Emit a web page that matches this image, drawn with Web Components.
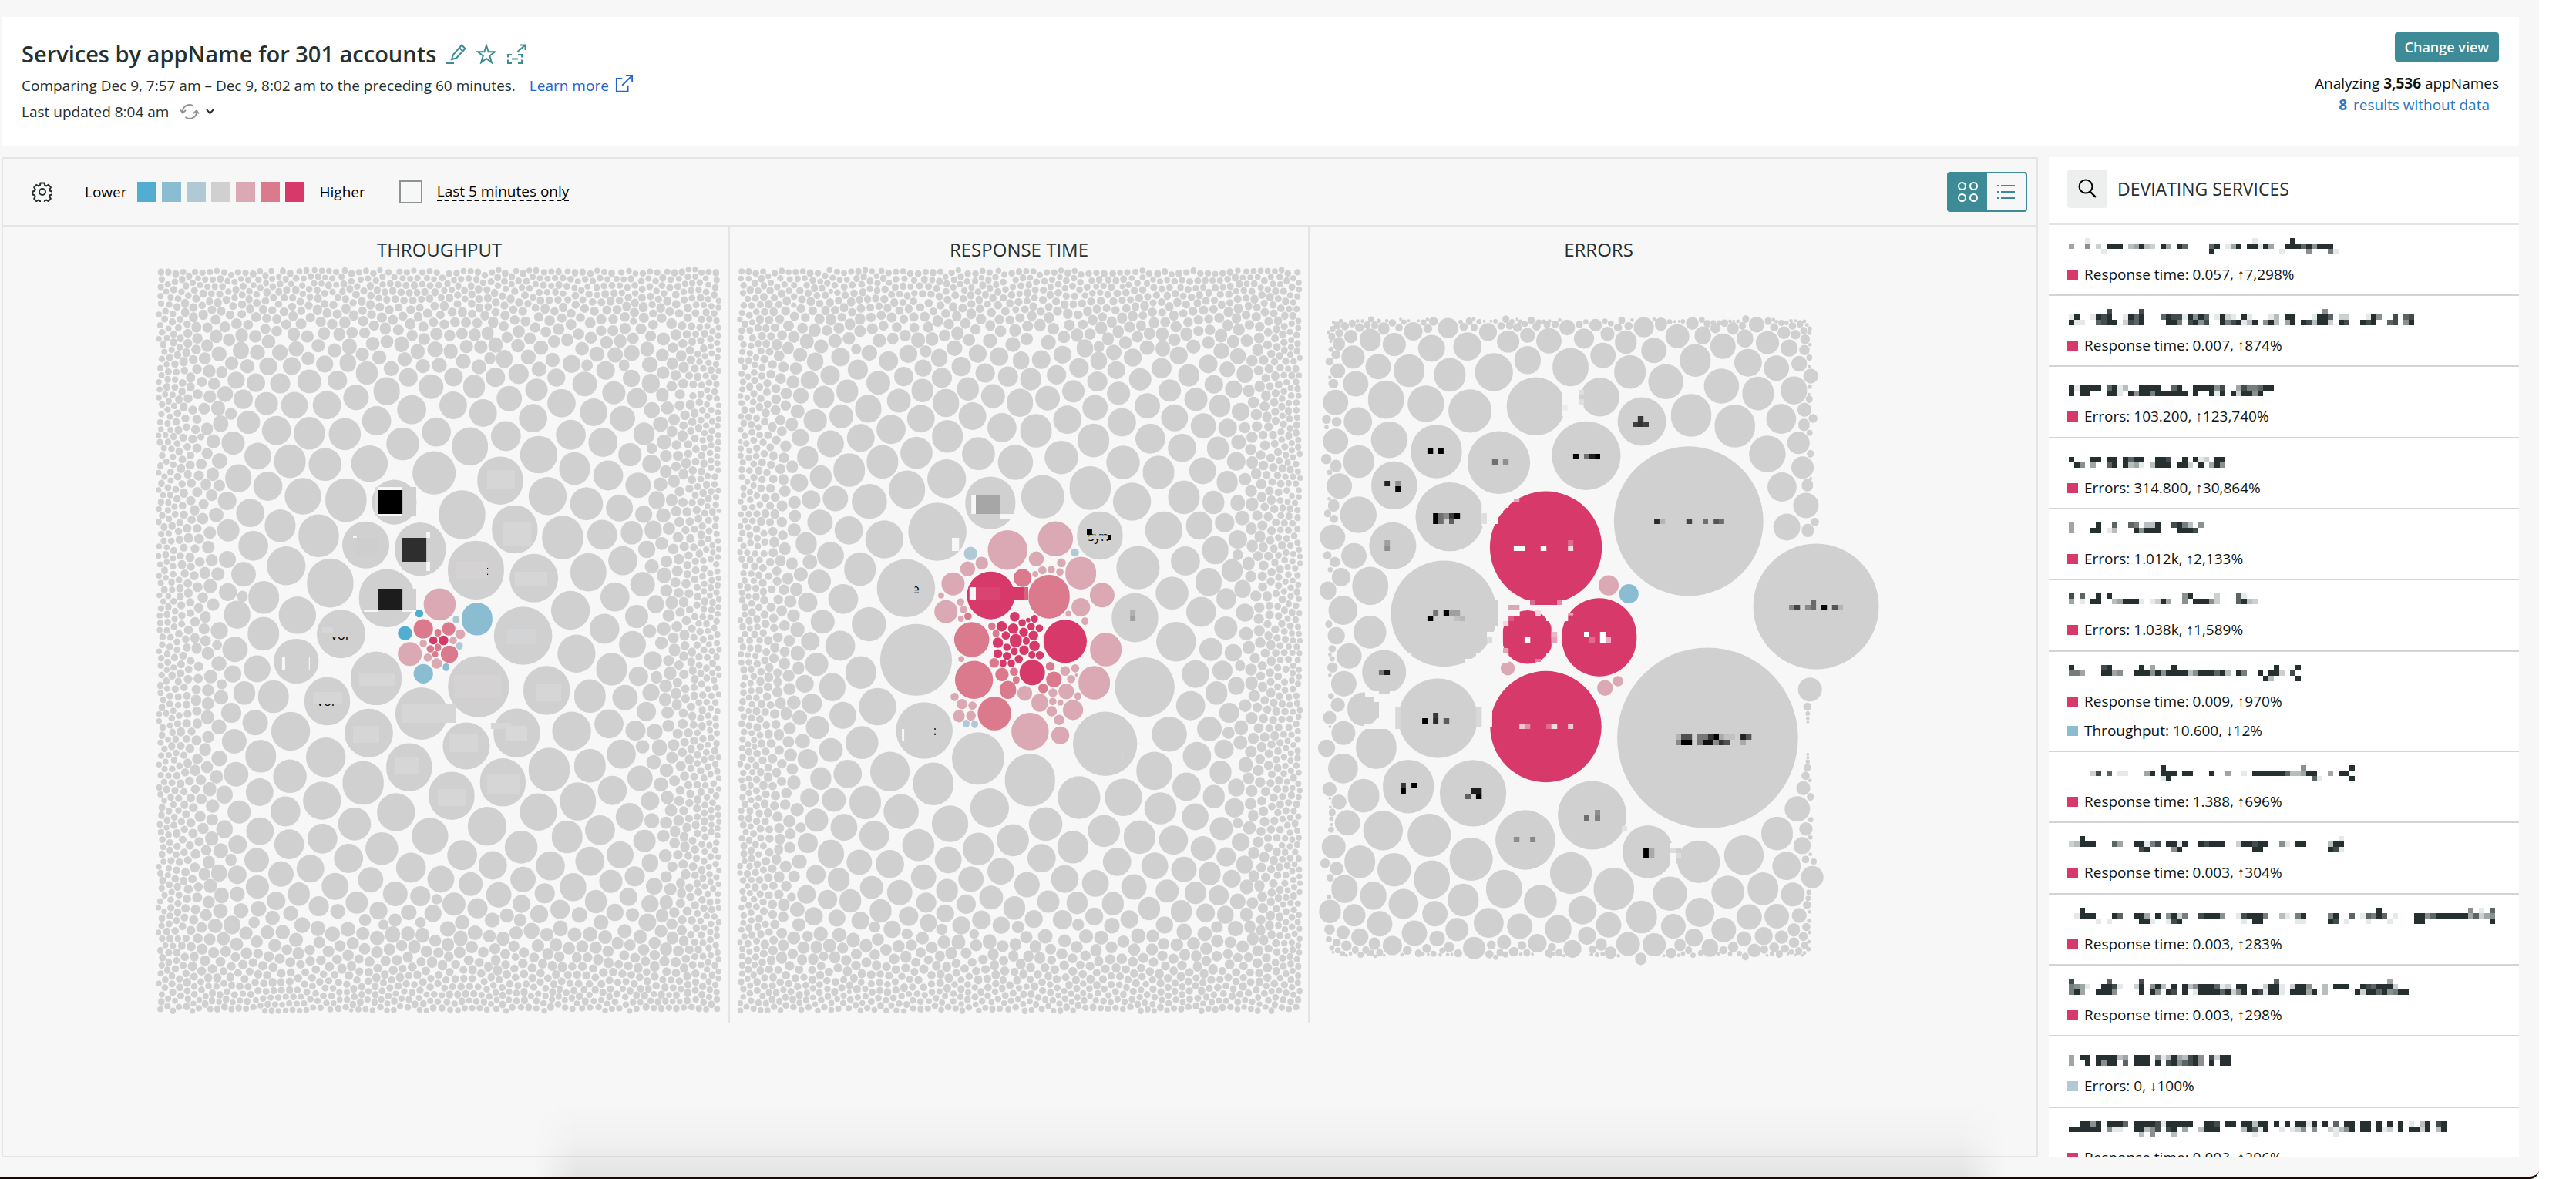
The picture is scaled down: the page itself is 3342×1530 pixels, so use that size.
<!DOCTYPE html>
<html lang="en">
<head>
<meta charset="utf-8">
<title>Services by appName</title>
<style>
  body { margin: 0; background: #fff; font-family: "Open Sans", "Noto Sans", sans-serif; font-size: 19px; color: #0d1414; }
</style>
</head>
<body>
<app-frame>
  <page-header slot="header"></page-header>
  <chart-panel>
    <chart-toolbar slot="toolbar"></chart-toolbar>
    <bubble-chart data="throughput">THROUGHPUT</bubble-chart>
    <bubble-chart data="response">RESPONSE TIME</bubble-chart>
    <bubble-chart data="errors">ERRORS</bubble-chart>
  </chart-panel>
  <service-list>DEVIATING SERVICES</service-list>
</app-frame>

<script>
const define = (name, html, setup) => customElements.define(name, class extends HTMLElement {
  connectedCallback() {
    if (this.shadowRoot) return;
    this.attachShadow({ mode: 'open' }).innerHTML = html;
    if (setup) setup(this, this.shadowRoot);
  }
});

/* ---------- icons ---------- */
const ICONS = {
  pencil: '<path d="M0 25h10M7 20l2-6L20 1.500l4.500 4.500L13 18.500zM17 5l4.500 4.500"/>',
  star: '<path d="M13 2l2.700 8.300H24l-6.700 5.200 2.500 8.700L13 19l-6.800 5.200 2.500-8.700L2 10.300h8.300z"/>',
  share: '<path d="M7 14H2v3.500M2 20.500V25h5M15 14h5v3.500M20 20.500V25h-5M7 19.500h8M14.500 10L24.500 1.500M18 1.500h6.500V8"/>',
  external: '<path d="M10 6.500H2v18h16V16M10 16L24 2M15 2h9v9"/>',
  refresh: '<path d="M4 14a9 9 0 0 1 14.500-8M22 12a9 9 0 0 1-14.500 8M1 10.500l3 4 4-3.500M25 15.500l-3-4-4 3.500"/>',
  chevron: '<path d="M9 10l4.500 5 4.500-5"/>',
  gear: '<circle cx="13" cy="13" r="4"/><path d="M10.500 1.500h5l.7 3 2 .9 2.700-1.600 3 3.400-1.500 2.800.7 1.800 2.600.7v4l-2.600.7-.8 2 1.500 2.700-3 3.200-2.700-1.500-2 .9-.6 3h-5l-.7-3-1.900-.9-2.700 1.500-3-3.200 1.500-2.700-.8-2-2.400-.7v-4l2.500-.7.8-1.900-1.600-2.700 3-3.300 2.700 1.500 2-.9z"/>',
  bubbles: '<circle cx="5.500" cy="5.500" r="4.500"/><circle cx="20.500" cy="5.500" r="4.500"/><circle cx="5.500" cy="20.500" r="4.500"/><circle cx="20.500" cy="20.500" r="4.500"/>',
  list: '<path d="M1 5h2M6 5h18M1 13h2M6 13h18M1 21h2M6 21h18"/>',
  search: '<circle cx="11" cy="10" r="8.500"/><path d="M17 17l7 7" stroke-width="2.400"/>'
};
define('ui-icon', `<style>
  :host { display: inline-block; width: 26px; height: 26px; flex: none; }
  svg { display: block; width: 100%; height: 100%; fill: none; stroke: currentColor; stroke-width: 2; }
</style><svg viewBox="0 0 26 26" aria-hidden="true"></svg>`,
(host, root) => { root.querySelector('svg').innerHTML = ICONS[host.getAttribute('name')]; });

/* ---------- page frame ---------- */
define('app-frame', `<style>
  :host { display: flex; flex-direction: column; gap: 14px; box-sizing: border-box; height: 100vh; margin-right: 48px; position: relative;
    padding: 22px 26px 25px 2px; background: #f7f7f7; border-bottom: 3px solid #1c0505; border-bottom-right-radius: 12px; }
  main { display: flex; gap: 14px; flex: 1; min-height: 0; }
  /* shade that rises from the lower edge of the window */
  :host::after { content: ""; position: absolute; left: 21%; right: 21%; bottom: 0; height: 96px; pointer-events: none;
    background: linear-gradient(rgba(0,0,0,0), rgba(0,0,0,.022) 50%, rgba(0,0,0,.08));
    -webkit-mask: linear-gradient(90deg, transparent, #000 3%, #000 97%, transparent); mask: linear-gradient(90deg, transparent, #000 3%, #000 97%, transparent); }
</style><slot name="header"></slot><main><slot></slot></main>`);

define('page-header', `<style>
  :host { display: flex; justify-content: space-between; padding: 20px 26px 28px; background: #fff; color: #263030; }
  h1 { display: flex; align-items: center; margin: 8px 0 4px; font-size: 29px; line-height: 40px; font-weight: 600; }
  h1 span { margin-right: 13px; }
  h1 button { margin-right: 13px; color: #3c8b96; }
  button { font: inherit; border: 0; padding: 0; background: none; display: flex; color: inherit; cursor: pointer; }
  p { display: flex; align-items: center; margin: 0; line-height: 34px; }
  a { display: flex; align-items: center; gap: 8px; margin-left: 18px; color: #2264d1; text-decoration: none; }
  a ui-icon { width: 24px; height: 24px; margin-bottom: 6px; }
  .refresh { margin-left: 14px; color: #8e9494; }
  .refresh + button { color: #263030; }
  .side { display: flex; flex-direction: column; align-items: flex-end; line-height: 28px; color: #0d1414; }
  .change { height: 38px; align-items: center; margin-bottom: 14px; padding: 0 13px; border-radius: 4px; background: #3c8b96; color: #fff; font-size: 18px; font-weight: 600; }
  b { font-weight: 700; }
  .side a { margin: 0 12px 0 0; color: #2a78bf; }
</style>
<div>
  <h1><span>Services by appName for 301 accounts</span>
    <button aria-label="Edit name"><ui-icon name="pencil"></ui-icon></button>
    <button aria-label="Add to favorites"><ui-icon name="star"></ui-icon></button>
    <button aria-label="Share"><ui-icon name="share"></ui-icon></button></h1>
  <p><span>Comparing Dec 9, 7:57 am – Dec 9, 8:02 am to the preceding 60 minutes.</span>
    <a href="#learn">Learn more <ui-icon name="external"></ui-icon></a></p>
  <p>Last updated 8:04 am <button class="refresh" aria-label="Refresh"><ui-icon name="refresh"></ui-icon></button><button aria-label="Refresh options"><ui-icon name="chevron"></ui-icon></button></p>
</div>
<div class="side">
  <button class="change">Change view</button>
  <span>Analyzing <b>3,536</b> appNames</span>
  <a href="#nodata"><b>8</b>results without data</a>
</div>`);

define('chart-panel', `<style>
  :host { display: flex; flex-direction: column; flex: 1; min-width: 0; box-sizing: border-box; border: 2px solid #e3e4e4; }
  .charts { display: flex; justify-content: center; }
</style><slot name="toolbar"></slot><div class="charts"><slot></slot></div>`);

define('chart-toolbar', `<style>
  :host { display: flex; align-items: center; height: 86px; padding: 0 12px 0 38px; border-bottom: 2px solid #e3e4e4; color: #000; }
  button { display: flex; align-items: center; justify-content: center; border: 0; padding: 0; background: none; color: #263030; cursor: pointer; }
  .scale { display: flex; gap: 7px; margin: 0 20px 0 13px; }
  .scale i { width: 25px; height: 26px; }
  .low { margin-left: 42px; }
  label { display: flex; align-items: center; gap: 19px; margin-left: 44px; }
  input { appearance: none; width: 30px; height: 30px; margin: 0; border: 2px solid #8e9494; }
  label span { line-height: 22px; border-bottom: 2px dashed #000; }
  .views { display: flex; margin-left: auto; border: 2px solid #3c8b96; border-radius: 4px; }
  .views button { width: 50px; height: 48px; color: #3c8b96; }
  .views button[aria-pressed=true] { background: #3c8b96; color: #fff; }
</style>
<button aria-label="Settings"><ui-icon name="gear"></ui-icon></button>
<span class="low">Lower</span>
<span class="scale"><i style="background:#52aed1"></i><i style="background:#8abdd2"></i><i style="background:#b0c9d4"></i><i style="background:#d0d0d0"></i><i style="background:#dba9b3"></i><i style="background:#db798d"></i><i style="background:#d8396b"></i></span>
<span>Higher</span>
<label><input type="checkbox"><span>Last 5 minutes only</span></label>
<div class="views"><button aria-label="Bubble view" aria-pressed="true"><ui-icon name="bubbles"></ui-icon></button><button aria-label="List view" aria-pressed="false"><ui-icon name="list"></ui-icon></button></div>`);

/* ---------- bubble layouts ----------
   Each block: vertical origin, then "x,y,r" triples keyed by colour step.
   Horizontal units are finer than chart pixels by UX, vertical ones by UY. */
const UX = 1568 / 760, UY = 3;
const COLOR = { g: '#d0d0d0', a: '#dba9b3', b: '#db798d', c: '#d8396b', x: '#b0c9d4', y: '#8abdd2', z: '#52aed1', w: '#f7f7f7' };
const CHARTS = {
throughput: { dx: -5, fill: [24, 1541], blocks: [
 { dy: -40, g: '663,1055,60 770,941,58 947,971,61 845,1104,62 986,1161,61 587,1222,63 733,1238,68 882,1320,75 1037,1351,65 643,1429,74 534,1047,55 597,905,49 419,1032,49 461,1186,54 374,1303,52 492,1370,62 314,1426,41 404,1495,50 243,1493,35 521,1568,65 313,1567,42 1008,1575,78 1114,1193,55 1074,1031,51 1178,1061,44 1220,1182,40 1183,1328,48 1275,1283,39 1254,1424,39 1328,1375,33 1135,1476,52 1226,1548,40 1312,1500,31 1050,870,50 962,798,40 866,838,48 776,782,39 686,828,44 616,738,39 710,695,39 821,678,37 901,708,37 1035,728,38 971,652,34 1111,670,38 1173,595,33 1197,705,37 1274,730,34 1251,629,31 1136,793,40 1222,822,39 1146,924,41 1236,951,40 1316,989,34 1294,870,31 1332,789,28 1313,650,27 1298,573,23 1229,542,25 1138,517,24 1266,1078,36 1299,1174,29 1352,906,25 1331,1102,23 1366,1047,22 1339,1239,23 1363,1452,22 643,623,35 561,647,34 483,677,38 396,678,36 321,671,31 259,654,26 273,744,31 348,776,39 436,787,41 531,790,43 590,552,29 511,581,26 436,585,32 358,593,27 293,590,25 240,580,23 326,526,24 389,525,24 762,605,33 701,569,25 822,568,25 877,605,29 934,569,26 996,556,27 1044,617,30 1097,570,24 477,517,23 539,513,22 232,825,31 298,876,36 384,896,42 478,908,44 246,962,35 325,993,39 278,1097,38 358,1147,41 219,1165,30 216,1050,25 286,1225,40 260,1336,33 218,1405,24 655,535,20 740,525,19 784,522,20 848,507,20 890,528,20 958,497,22 1022,490,20 1051,537,20 1087,501,19 270,526,19 228,514,18 623,491,19 691,499,19 578,479,18 433,496,18',
   a: '785,1453,43', b: '741,1548,26 809,1548,18', z: '730,1488,11', x: '829,1512,9', y: '885,1510,41' },
 { dy: 470, g: '401,144,60 615,211,68 484,300,61 889,243,82 736,348,70 1071,258,62 595,424,65 856,474,63 991,424,62 703,557,61 817,668,61 954,616,61 340,282,41 386,417,52 480,518,53 1187,280,42 1245,175,41 1151,115,51 1301,79,36 1281,286,34 1138,416,52 1238,388,39 1078,566,55 1187,551,42 1271,506,39 1338,340,26 1309,414,27 1321,600,34 1317,203,26 1355,142,25 580,618,55 384,592,45 306,514,41 291,383,34 227,345,27 262,268,29 296,174,36 237,98,34 231,194,23 235,456,33 240,584,33 303,654,37 372,729,40 470,687,51 668,732,51 557,778,44 759,825,49 912,787,52 1049,731,50 1155,690,48 1247,647,39 1348,688,25 1293,750,37 1214,802,40 1126,828,41 1003,868,44 845,899,40 630,874,44 471,835,40 382,857,40 304,806,37 248,731,31 244,858,25 295,919,33 360,973,34 439,952,37 541,912,39 708,948,40 788,993,36 927,939,38 1081,941,39 1187,923,39 1268,898,36 1333,844,30 1348,929,22 1307,982,27 1243,1001,31 1142,1024,35 1008,994,34 868,1012,32 600,995,34 505,1021,36 408,1051,29 297,1023,31 243,976,25 347,1077,25 563,1084,30 666,1050,33 733,1059,27 823,1090,31 943,1054,34 1066,1048,27 1203,1080,29 1290,1062,24 767,1126,23 886,1106,27 1004,1089,24 1051,1129,24 1107,1110,26 1254,1122,23 621,1115,24 461,1098,27 209,664,22 209,798,22 195,25,23 702,1122,21 512,1118,20 386,1126,20 300,1108,21 253,1115,20 1159,1132,21 965,1134,19 1301,1131,18 195,523,21 243,1051,20',
   a: '840,39,13 821,64,10 741,75,10 705,116,32 753,130,11 777,153,14', b: '780,33,9 760,96,10 780,91,9 773,117,8 811,117,23',
   c: '768,63,11 795,63,13', x: '838,84,9', y: '802,167,9 741,193,26', z: '692,35,19' }],
 marks: [
 { dy: -40, r: '611,996,10,112,#dadada 621,996,64,12,#f7f7f7 621,1101,64,9,#f7f7f7 685,996,37,114,#d0d0d0 621,1008,64,93,#000 749,1170,10,24,#f7f7f7 685,1194,64,93,#2e2e2e 749,1287,10,36,#f7f7f7 685,1287,64,33,#d0d0d0 685,1392,37,81,#d0d0d0 621,1392,64,81,#1c1c1c 582,1473,39,9,#f7f7f7 685,1473,37,9,#f7f7f7 553,1188,10,6,#f7f7f7 563,1194,54,66,#cecece 912,930,74,72,#d6d6d6 953,1134,77,93,#d6d6d6 829,1284,84,69,#d4d2d3 986,1326,87,54,#d6d6d6 912,1311,2,6,#000 912,1334,2,4,#000 1050,1380,6,3,#333' },
 { dy: 470, t: '519,60,vor 482,319,vor', r: '495,32,50,16,#d0d0d0 470,12,29,24,#d6d6d6 446,264,78,48,#d6d6d6 363,129,8,51,#f7f7f7 435,129,2,51,#f7f7f7 569,192,95,48,#d6d6d6 823,198,126,84,#d4d2d2 685,312,144,72,#d6d6d6 966,18,78,60,#d2d4d6 1044,234,66,66,#d6d6d6 553,396,70,66,#d6d6d6 664,516,66,66,#d6d6d6 809,426,78,72,#d6d6d6 922,384,54,24,#d6d6d6 961,396,58,60,#d8d8d8 912,582,86,78,#d6d6d6 780,642,74,66,#d6d6d6' }] },
response: { dx: 3, fill: [12, 1528], blocks: [
 { dy: -40, g: '691,1058,67 831,1034,58 574,964,52 549,1170,78 465,1390,78 958,1000,55 984,1185,61 1070,1053,51 1086,1310,58 1155,1164,50 1078,1505,62 1177,1409,44 1255,1482,40 1213,1284,39 1293,1242,35 1275,1366,35 1338,1321,28 1250,1146,35 1209,1036,42 1288,1056,29 1318,1135,26 1259,933,36 1325,977,28 1141,939,42 1046,900,45 967,815,42 881,881,45 758,900,47 659,866,44 813,777,42 722,765,39 643,720,37 897,734,38 1043,744,38 1119,808,40 1204,844,38 1300,845,29 1349,896,25 971,687,34 1111,680,34 1184,727,36 1261,758,34 1326,766,25 1361,703,24 1305,680,28 1241,655,31 1171,620,30 1342,615,23 1289,596,25 1222,561,28 1274,517,25 1149,533,27 1092,577,30 1034,631,31 977,585,27 913,623,30 844,650,33 770,668,35 698,642,32 631,614,29 572,669,35 505,730,37 576,799,41 493,863,43 425,772,39 446,660,32 509,620,29 561,571,27 364,691,35 391,590,32 308,623,29 336,539,27 245,646,28 262,561,26 292,721,32 222,737,31 344,805,37 263,828,36 402,898,42 313,930,42 202,881,28 237,957,29 468,1006,48 367,1052,47 276,1041,34 407,1200,51 312,1165,38 235,1133,34 198,1216,28 263,1262,36 342,1316,42 233,1363,31 297,1432,40 366,1530,46 242,1520,32 202,1445,26 799,576,28 738,566,27 868,559,26 928,532,26 677,552,26 613,527,26 459,566,26 207,580,24 179,979,24 211,1045,25 1372,1485,24 1366,1393,22 1353,1200,25 182,804,23 1321,1545,31 418,505,26 290,490,25 471,478,24 511,533,23 554,493,22 657,477,24 714,488,25 773,503,22 827,500,25 884,481,24 944,456,22 981,505,22 1028,541,24 1072,492,24 1195,484,24 1325,538,21 1372,556,22 222,508,22 690,426,19 846,433,20 595,455,21 751,441,20 367,474,21',
   a: '737,1241,53 865,1198,47 814,1276,20 668,1292,17 630,1315,20 591,1373,31 572,1481,31 933,1331,41 990,1417,33 933,1464,25 881,1291,12 830,1320,11 854,1318,10 877,1327,10 811,1335,8 559,1418,8 611,1444,10 619,1473,9 612,1509,8 900,1489,8 944,1518,9',
   b: '777,1350,24 848,1423,55 631,1499,10 695,1538,10', c: '692,1418,64 756,1501,13 809,1509,9 792,1514,6 776,1525,10', x: '638,1255,18 917,1251,11' },
 { dy: 470, g: '492,139,96 514,414,76 658,523,70 797,607,67 998,466,86 1104,245,80 1188,68,53 289,84,40 344,188,41 226,156,31 268,245,35 389,321,50 296,355,36 228,402,31 347,461,44 213,309,27 264,490,32 422,574,53 538,622,54 309,583,38 202,525,27 237,601,28 272,684,32 356,694,42 452,730,47 583,777,49 689,715,52 928,675,57 839,778,45 1047,674,50 1130,571,48 1170,428,47 1244,514,38 1216,633,38 1146,717,43 1277,408,33 1227,317,39 1240,194,37 1281,98,31 1341,111,23 1312,181,27 1296,268,29 1349,240,22 1330,345,27 1316,487,26 1307,577,29 1289,671,29 1239,750,36 1309,796,31 1344,715,26 1349,636,22 995,805,43 1090,829,42 1181,841,39 1260,873,33 1322,906,26 912,868,41 751,841,43 828,911,38 659,875,41 578,918,36 498,860,43 380,823,40 299,791,36 226,763,31 207,676,25 264,894,35 202,852,27 340,927,34 422,934,38 512,985,34 639,993,34 719,962,36 789,1014,34 890,992,37 972,1009,36 1030,925,38 1131,941,36 1209,955,34 1278,971,29 1337,991,24 1075,1023,34 1164,1039,31 1240,1046,28 1302,1056,27 448,1045,34 373,1025,31 285,994,29 224,975,26 199,1052,25 255,1072,26 316,1077,29 397,1116,29 519,1084,27 575,1037,29 693,1064,32 626,1090,26 755,1105,29 846,1080,30 923,1085,28 1019,1088,29 1116,1107,29 1202,1118,28 1267,1124,25 472,1137,26 570,1126,24 667,1151,25 807,1148,24 884,1151,26 969,1138,24 1063,1149,24 1320,1131,22 1353,1079,21 1361,848,24 1371,936,22 343,1154,24 613,1173,24 209,67,25 194,232,24 720,1172,23 525,1163,22 428,1188,23 1157,1171,23 280,1144,23 1016,1174,21',
   a: '1000,99,42 969,228,42 613,136,8 783,269,20 823,306,22 894,262,21 912,334,27 797,418,50 878,433,24 858,267,12 858,301,10 878,305,8 855,339,14 875,373,14 891,182,13 918,172,11 907,214,11 925,280,9 595,283,11 615,311,14 643,317,11 607,358,15 639,356,13 921,198,4',
   b: '641,60,47 647,217,51 702,348,45 706,36,9 701,151,13 722,196,18 754,185,11 760,217,9 738,256,22 851,164,12 861,215,21 832,250,13',
   c: '891,67,58 721,8,14 752,17,14 780,31,12 800,10,10 822,16,10 732,44,11 806,44,13 759,64,16 787,65,9 711,72,14 809,85,14 735,90,10 755,106,9 781,101,13 711,115,12 735,124,11 767,136,11 802,119,9 823,121,11 725,152,9 747,152,10 803,188,34',
   x: '626,387,9 649,389,9' }],
 marks: [
 { dy: -40, t: '492,1411,e 980,1206,syn', r: '640,1026,12,75,#f7f7f7 652,1026,64,75,#a6a6a6 716,1101,39,18,#f7f7f7 588,1194,19,51,#f7f7f7 949,1161,14,21,#000 955,1183,50,14,#d0d0d0 1006,1182,8,21,#000 480,1380,8,33,#d0d0d0 716,1386,64,51,#d8396b 780,1386,12,51,#db6080 635,1386,17,51,#f7f7f7 652,1386,64,51,#da4473 1065,1476,14,21,#b0b0b0 1065,1497,14,21,#a0a0a0' },
 { dy: 470, r: '454,408,6,48,#f7f7f7 541,405,3,6,#222 541,425,3,7,#222 1042,501,2,15,#f7f7f7' }] },
errors: { dx: -8, blocks: [
 { dy: 40, g: '1031,889,200 1372,1221,168 376,1249,142 622,442,78 794,406,52 906,501,65 757,634,92 523,661,84 356,618,68 243,750,61 392,872,92 239,985,63 1038,477,54 1155,519,54 1279,491,40 1242,627,49 1281,756,39 1336,680,30 1345,828,34 1294,912,36 1350,925,16 1369,892,11 1349,749,15 1325,584,30 1340,514,15 1364,489,12 1341,455,19 1354,414,9 1313,380,35 1358,324,20 1327,276,21 1266,293,34 1217,392,42 1119,363,47 1190,272,37 1049,263,41 970,346,47 874,308,42 802,244,34 715,289,48 600,262,35 510,309,51 446,460,58 392,319,42 328,432,49 283,303,41 221,416,48 230,572,49 148,657,41 146,501,38 140,354,34 200,287,34 133,250,31 243,201,31 343,216,36 439,209,38 548,190,30 657,187,34 751,178,27 863,192,29 938,224,34 1001,169,32 1123,208,34 1242,194,31 1300,215,23 911,134,27 706,135,21 494,153,24 387,137,27 294,150,25 179,183,28 127,170,18 95,199,16 92,304,20 80,354,13 86,427,34 86,578,34 62,493,12 89,502,13 61,647,14 87,674,15 96,752,34 147,864,49 78,952,34 135,1024,34 179,1141,48 101,1107,25 106,1236,39 66,1159,22 84,1048,14 64,1022,11 81,828,15 82,880,11 65,859,9 178,1321,44 1069,166,22 1103,137,14 1041,119,17 957,122,16 1150,139,15 1182,178,22 1213,124,21 1286,155,17 1317,163,13 1341,223,14 1343,181,13 782,126,17 814,160,19 842,135,11 870,129,11 739,123,9 600,166,20 573,135,12 552,128,10 529,129,10 624,131,11 652,123,9 674,122,9 457,135,9 429,133,11 348,111,12 333,139,12 256,136,10 238,117,10 215,139,15 171,125,9 191,126,9 150,135,12 131,119,9 111,130,11 96,157,11 76,170,9 91,127,9 78,141,8 181,103,8 321,115,8 444,110,9 542,103,9 610,107,9 852,107,9 1184,102,9 1066,105,8 1244,110,9 1260,134,11 1309,129,10 1339,147,9 1329,121,9 1175,128,9 1127,118,10 1081,120,9 593,121,8 70,267,11 87,241,12 74,220,7 1355,139,6 1354,155,6 1354,252,8 1357,626,9 1355,545,8 1355,365,6 70,699,7 72,1078,7 68,1290,9 69,802,5 62,523,6 81,115,5 100,110,6 145,110,5 158,110,5 202,109,6 223,109,5 269,114,7 260,103,4 282,109,4 308,109,4 332,104,5 421,113,6 456,101,5 470,112,7 484,110,4 502,110,4 514,111,6 558,112,7 572,103,4 581,112,6 630,115,8 644,112,6 659,110,5 686,106,5 756,113,7 807,110,7 823,119,8 880,106,5 939,103,5 980,113,7 994,112,4 1006,111,4 1016,111,6 1097,116,7 1113,117,7 1142,111,5 1152,111,4 1163,111,5 1258,105,5 1266,112,5 1279,117,8 1293,117,6 1305,109,5 1317,109,4 1341,111,5 1348,125,5 67,153,5 73,190,4 71,329,5 1356,202,5 1354,287,4 1353,395,4 1358,723,4',
   a: '817,1139,27', y: '871,1172,26', c: '649,991,150' },
 { dy: 470, g: '1082,443,242 88,45,23 122,124,34 77,96,10 216,186,59 108,232,34 78,169,14 92,314,19 160,331,42 70,364,18 360,366,106 107,424,32 195,480,54 62,483,23 106,562,40 281,632,68 454,658,89 161,668,42 70,642,19 95,692,20 118,773,34 213,803,53 337,822,58 81,866,32 151,925,41 243,956,45 344,994,48 449,915,58 594,840,80 773,744,92 922,886,67 1058,925,57 1179,899,53 1268,815,42 1322,719,34 1338,638,19 1344,590,11 1349,559,9 1350,535,6 1356,254,32 1349,321,11 1350,348,6 1350,367,5 1350,380,4 1350,507,4 1350,520,4 1345,797,18 1335,862,23 1293,941,38 1362,985,30 1344,916,10 1366,924,8 1358,761,7 1357,830,6 1357,672,9 1356,608,5 1357,896,5 1230,1030,41 1310,1052,32 1136,1043,44 981,1049,46 831,1031,54 716,969,56 537,1031,48 634,1079,44 428,1074,41 268,1089,40 187,1057,35 110,1031,35 89,951,18 58,931,13 72,987,9 71,1118,29 136,1133,30 204,1166,34 352,1127,34 496,1163,40 747,1114,38 905,1140,41 1061,1122,39 1193,1140,34 1267,1137,33 1327,1134,20 1125,1190,33 990,1176,33 817,1171,34 682,1187,35 579,1176,34 411,1189,31 297,1203,34 151,1218,23 106,1200,18 70,1189,14 115,1252,14 89,1239,11 190,1244,15 238,1251,26 358,1224,21 390,1257,14 457,1261,30 414,1281,11 503,1249,12 537,1238,19 563,1275,13 585,1251,12 626,1242,25 720,1264,24 759,1213,24 797,1247,15 822,1279,15 869,1245,32 939,1248,31 903,1303,15 1045,1220,24 1008,1249,15 1088,1260,22 984,1280,14 1179,1225,20 1150,1257,14 1124,1269,11 1207,1270,18 1232,1214,24 1280,1218,18 1313,1190,16 1346,1179,11 1338,1216,12 1313,1240,14 1260,1258,13 1233,1267,11 1289,1263,11 1274,1284,9 1183,1294,9 1326,1272,9 1342,1250,10 1348,1093,11 1353,1044,7 1306,1276,7 330,1262,12 308,1281,9 278,1270,12 372,1270,8 348,1283,8 167,1268,9 139,1268,9 153,1287,8 204,1279,9 182,1279,8 92,1270,8 76,1260,7 68,1227,8 105,1283,7 515,1297,7 498,1285,11 526,1278,9 541,1286,8 598,1279,9 665,1257,11 656,1281,9 684,1279,9 774,1266,9 1031,1269,9 1064,1280,8 1043,1289,7 68,3,8 77,135,7 74,280,8 77,733,9 74,800,8 75,757,6 69,1061,6 71,119,5 71,199,5 71,399,4 71,678,4 72,712,4 75,780,4 1353,1236,5 1352,1265,6 1354,1154,6 1355,1200,5 1355,1120,5 1351,1067,7 1341,1280,5 1335,1289,4 1317,1288,4 1297,1283,4 1254,1283,6 1241,1289,4 1167,1282,7 1142,1283,6 1110,1284,5 1016,1282,6 1005,1289,5 965,1291,4 843,1291,5 801,1284,6 786,1287,6 771,1286,5 697,1291,4 670,1284,5 661,1294,4 613,1285,4 582,1285,5 320,1284,5 334,1285,4 366,1287,5 386,1287,5 397,1285,4 264,1287,5 216,1289,4 192,1293,5 173,1287,4 126,1283,5 115,1289,4 79,1277,4',
   a: '547,172,19 807,248,21 842,222,14', c: '792,51,100 600,50,68 649,399,149' }],
 marks: [
 { dy: 40, r: '693,378,57,102,#f7f7f7 737,378,14,18,#dedede 737,396,14,20,#d0d0d0 737,416,14,20,#dedede 693,438,14,20,#ececec 477,804,14,104,#f7f7f7 477,858,14,42,#dedede 491,804,72,12,#f7f7f7 491,816,58,21,#f7f7f7 491,837,43,21,#f7f7f7 491,858,29,42,#f7f7f7 563,804,15,12,#e8a0b5 895,480,15,21,#383838 881,501,15,21,#404040 895,501,15,21,#333 910,501,14,21,#404040 332,606,15,21,#000 361,606,14,21,#000 505,648,15,21,#707070 534,648,15,21,#909090 722,627,15,21,#000 751,627,14,21,#707070 765,627,15,21,#1e1e1e 780,627,14,21,#000 217,732,14,21,#222 246,732,14,21,#8e8e8e 246,753,14,21,#000 347,858,14,42,#000 361,858,14,42,#707070 375,858,15,21,#8a8a8a 390,858,14,21,#383838 404,858,15,21,#000 390,879,14,21,#606060 217,963,14,21,#a0a0a0 217,984,14,21,#8e8e8e 563,984,29,21,#fff 635,984,15,21,#fff 708,963,14,21,#e06a92 708,984,14,21,#f7dae4 939,879,14,21,#2a2a2a 953,879,15,21,#b4b4b4 1025,879,15,21,#444 1069,879,14,21,#707070 1098,879,14,21,#555 1112,879,14,21,#6e6e6e 1300,1215,14,21,#888 1314,1215,15,21,#444 1343,1215,15,21,#888 1358,1194,14,42,#6a6a6a 1386,1215,15,21,#000 1415,1215,15,21,#555 1430,1215,14,21,#b4b4b4 578,1194,130,18,#f7f7f7 607,1194,86,21,#d8396b 607,1194,14,21,#de6a90 679,1194,14,21,#e58aa8 549,1215,29,21,#dba9b3 520,1236,59,21,#f7f7f7 621,1236,14,21,#f2d6e0 520,1257,29,21,#f7f7f7 549,1257,14,21,#de5a84 650,1236,14,42,#f7f7f7 664,1236,29,110,#f7f7f7 693,1240,15,38,#f7f7f7 708,1248,14,8,#e8a0b5 534,1278,15,21,#f2d6e0 505,1194,15,105,#d0d0d0 347,1236,14,21,#747474 375,1236,15,21,#000 390,1236,29,21,#a0a0a0 332,1257,15,21,#000 404,1257,15,21,#c0c0c0 419,1257,14,21,#b8b8b8' },
 { dy: 470, r: '664,-30,29,150,#f7f7f7 664,30,15,21,#e8b8c8 664,51,15,21,#e5a3b8 534,93,15,21,#e5a3b8 534,114,15,36,#f7f7f7 650,114,14,36,#f7f7f7 621,135,14,12,#e07a9a 520,0,14,150,#f7f7f7 592,51,15,21,#fff 751,30,14,21,#fff 765,51,15,21,#e06a92 794,30,15,42,#fff 809,51,14,21,#f0a8c2 491,30,29,42,#f7f7f7 491,51,14,21,#dcdcdc 462,114,44,21,#f7f7f7 433,135,29,15,#f7f7f7 274,114,15,40,#f7f7f7 202,177,14,21,#777 216,177,15,21,#1c1c1c 165,261,37,21,#f7f7f7 231,261,29,21,#f7f7f7 188,282,60,84,#f7f7f7 188,303,14,63,#d0d0d0 161,387,99,21,#f7f7f7 246,324,14,84,#d8d8d8 462,324,15,78,#d8d8d8 491,318,14,84,#f7f7f7 347,345,14,21,#383838 347,366,14,21,#2a2a2a 318,366,14,21,#000 375,366,15,21,#5c5c5c 578,387,14,21,#f3c6d6 592,387,15,21,#e68aa8 650,387,14,21,#e06a92 664,387,15,21,#f7dae4 708,387,14,21,#f3c6d6 997,429,14,21,#b4b4b4 1011,429,29,21,#505050 1054,429,29,21,#777 1083,429,15,21,#333 1098,429,14,21,#000 1112,429,14,21,#aaa 1126,429,29,21,#c2c2c2 1170,429,14,21,#222 1184,429,15,21,#555 997,450,14,21,#888 1011,450,29,21,#000 1054,450,15,21,#777 1069,450,28,21,#111 1098,450,14,21,#888 1112,450,14,21,#333 1126,450,15,21,#505050 1170,450,14,21,#aaa 260,618,14,21,#383838 289,618,14,21,#000 260,639,14,21,#000 448,639,29,21,#1c1c1c 433,660,15,21,#606060 462,660,15,21,#000 751,744,14,21,#6e6e6e 780,723,14,21,#8e8e8e 780,744,14,21,#808080 563,828,15,21,#8e8e8e 607,828,14,21,#888 910,870,14,42,#000 924,870,15,42,#aaa 982,852,15,80,#f7f7f7 982,870,15,21,#dcdcdc 997,870,14,62,#d0d0d0 997,891,14,21,#dcdcdc 852,786,14,21,#e2e2e2' }] }
};

/* Packs small neutral bubbles round the given ones: they get smaller towards the edge of the box.
   Seeds are spread by error diffusion, pushed apart until they settle, and the holes left are filled. */
function packRim(fixed, box, seed) {
  const rnd = () => ((seed = (seed * 16807) % 2147483647) / 2147483647);
  const size = (x, y) => {
    const d = Math.max(0, Math.min(x - box.l, box.r - x, 0.78 * (y - box.t), 0.78 * (box.b - y)));
    return 4 + 0.0008 * d * d;
  };
  const dots = [], step = 4, width = Math.ceil((box.r - box.l) / step);
  let below = new Array(width + 2).fill(0);
  for (let y = box.t + step / 2; y < box.b; y += step) {
    const here = below; below = new Array(width + 2).fill(0);
    for (let i = 1; i <= width; i++) {
      const x = box.l + (i - 0.5) * step, r = size(x, y);
      if (fixed.some(f => Math.hypot(f.x - x, f.y - y) < f.r + r * 0.6)) continue;
      let v = here[i] + step * step * 0.84 / (Math.PI * (r + 0.8) ** 2);
      if (v > 0.4 + rnd() * 0.2) { dots.push({ x: x + rnd(), y: y + rnd(), k: 0.9 + rnd() * 0.18, r }); v -= 1; }
      here[i + 1] += v * 7 / 16; below[i - 1] += v * 3 / 16; below[i] += v * 5 / 16; below[i + 1] += v / 16;
    }
  }
  const cell = 40, cols = 30, pad = 1.5;
  const key = (x, y) => Math.floor(y / cell + 2) * cols + Math.floor(x / cell + 2);
  const bins = new Map();
  fixed.forEach(f => {
    for (let y = f.y - f.r - cell; y <= f.y + f.r + cell; y += cell / 2) for (let x = f.x - f.r - cell; x <= f.x + f.r + cell; x += cell / 2) {
      const k = key(x, y);
      if (!bins.has(k)) bins.set(k, new Set());
      bins.get(k).add(f);
    }
  });
  for (let pass = 0; pass < 140; pass++) {
    const grid = new Map();
    dots.forEach(p => { p.r = size(p.x, p.y) * p.k; const k = key(p.x, p.y); (grid.get(k) || grid.set(k, []).get(k)).push(p); });
    for (const p of dots) {
      const k = key(p.x, p.y);
      for (const o of [-cols - 1, -cols, -cols + 1, -1, 0, 1, cols - 1, cols, cols + 1]) for (const q of grid.get(k + o) || []) {
        if (q === p) continue;
        const dx = p.x - q.x, dy = p.y - q.y, d = Math.hypot(dx, dy) || 0.01, over = p.r + q.r + pad - d;
        if (over > 0) { const m = over / d * 0.4; p.x += dx * m; p.y += dy * m; q.x -= dx * m; q.y -= dy * m; }
      }
      for (const f of bins.get(key(p.x, p.y)) || []) {
        const dx = p.x - f.x, dy = p.y - f.y, d = Math.hypot(dx, dy) || 0.01, over = p.r + f.r + pad - d;
        if (over > 0) { p.x += dx * over / d; p.y += dy * over / d; }
      }
      const rim = 4 + (p.k - 0.9) * 30;
      p.x = Math.min(box.r - rim, Math.max(box.l + rim, p.x));
      p.y = Math.min(box.b - rim, Math.max(box.t + rim, p.y));
    }
  }
  dots.forEach(p => {
    dots.forEach(q => { if (q !== p) { const over = p.r + q.r + 0.8 - Math.hypot(p.x - q.x, p.y - q.y); if (over > 0) { p.r -= over / 2; q.r -= over / 2; } } });
    fixed.forEach(f => { p.r = Math.min(p.r, Math.hypot(f.x - p.x, f.y - p.y) - f.r - 1); });
  });
  const kept = dots.filter(p => p.r > 2), solid = kept.concat(fixed), holes = [];
  for (let y = box.t + 5; y < box.b - 4; y += 3) for (let x = box.l + 5; x < box.r - 4; x += 3) {
    const want = size(x, y);
    if (want > 15) continue;
    const least = Math.min(want, 10) * 0.66 + 1;
    let room = want * 1.05 + 1;
    for (const c of solid) {
      const d = Math.hypot(c.x - x, c.y - y) - c.r;
      if (d < room && (room = d) < least) break;
    }
    if (room >= least) holes.push({ x, y, r: room - 1 });
  }
  holes.sort((a, b) => b.r - a.r);
  const added = [];
  for (const h of holes) if (added.every(c => Math.hypot(c.x - h.x, c.y - h.y) > c.r + h.r + 0.8)) added.push(h);
  return kept.concat(added);
}

const disc = c => `M${(c.x - c.r).toFixed(1)} ${c.y.toFixed(1)}a${c.r.toFixed(1)} ${c.r.toFixed(1)} 0 1 0 ${(2 * c.r).toFixed(1)} 0a${c.r.toFixed(1)} ${c.r.toFixed(1)} 0 1 0 ${(-2 * c.r).toFixed(1)} 0`;

define('bubble-chart', `<style>
  :host { display: block; flex: 0 1 752px; min-width: 0; box-sizing: border-box; border-right: 2px solid #e3e4e4; }
  :host(:last-of-type) { border-color: transparent; }
  h2 { margin: 0; height: 46px; line-height: 60px; font-size: 24px; font-weight: 400; text-align: center; color: #263030; }
  svg { display: block; width: 100%; overflow: visible; }
  text { font: 17px "Open Sans", sans-serif; text-anchor: middle; }
</style><h2><slot></slot></h2><svg viewBox="0 0 750 988"></svg>`,
(host, root) => {
  const spec = CHARTS[host.getAttribute('data')], groups = {}, all = [];
  for (const block of spec.blocks) for (const key in COLOR) if (block[key]) for (const item of block[key].split(' ')) {
    const [x, y, r] = item.split(',').map(Number);
    const c = { x: x / UX + spec.dx, y: y / UY + block.dy, r: r / UX };
    (groups[key] = groups[key] || []).push(c); all.push(c);
  }
  if (spec.fill) groups.g.push(...packRim(all, { l: spec.fill[0] / UX + spec.dx, r: spec.fill[1] / UX + spec.dx, t: 6, b: 976 }, host.getAttribute('data').length * 977));
  let out = '';
  for (const key in groups) out += `<path fill="${COLOR[key]}" d="${groups[key].map(disc).join('')}"/>`;
  for (const m of spec.marks) {
    for (const t of (m.t || '').split(' ').filter(Boolean)) { const [x, y, s] = t.split(','); out += `<text x="${Math.round(x / UX + spec.dx)}" y="${Math.round(y / UY + m.dy)}">${s}</text>`; }
    for (const q of m.r.split(' ')) { const [x, y, w, h, f] = q.split(','); out += `<rect x="${(x / UX + spec.dx).toFixed(1)}" y="${y / UY + m.dy}" width="${(w / UX + 0.1).toFixed(1)}" height="${h / UY}" fill="${f}"/>`; }
  }
  root.querySelector('svg').innerHTML = out;
});

/* ---------- deviating services ----------
   Masked names are mosaics of 7px cells: first row, then rows of "column:shades". */
const SERVICES = [
 { mask: [1, '3:1 34:1 41:9', '0:4 3:5 5:2 7:999 11:34932 17:94 20:97 26:79 29:149 33:99194 40:999795999', '6:1 26:9 39:1 44:5 48:61'], m: [['c', 'Response time: 0.057, ↑7,298%']] },
 { mask: [1, '7:8 13:8 47:5', '0:19 4:1989 10:1979 17:79881 22:9597 27:1921 32:91 37:13 40:99 45:1997 50:22 55:195 60:8 62:78', '0:911 5:7899 10:2879 18:996 22:8958 28:9689139 36:593 40:49 43:983992 50:98 54:989 59:78 62:59'], m: [['c', 'Response time: 0.007, ↑874%']] },
 { mask: [2, '0:919999 7:7913 13:9999 19:79 23:999958 31:486679 37:9', '0:9 2:99 7:991 11:95996999999 23:9 26:919 30:929959'], m: [['c', 'Errors: 103.200, ↑123,740%']] },
 { mask: [2, '0:9 4:99 7:99 10:9799 16:998 21:9 23:912 27:99', '1:95 4:4 7:79 10:9341 15:3999 20:992 24:9 26:495'], m: [['c', 'Errors: 314.800, ↑30,864%']] },
 { mask: [1, '0:4 5:9 8:7 11:76 14:339 19:8963 24:5', '0:4 4:99 7:13 12:95999 20:9998'], m: [['c', 'Errors: 1.012k, ↑2,133%']] },
 { mask: [1, '0:8 2:7 5:9 7:9 21:59 27:2 31:71', '0:4 2:1 4:99 8:349991 15:1294 21:5 23:99952 31:7932'], m: [['c', 'Errors: 1.038k, ↑1,589%']] },
 { mask: [1, '0:9 6:89 13:9 15:4 19:9 38:9 42:9', '0:664 6:9945 12:999595999935999793 31:96 35:9 37:992 41:8', '36:93 42:9'], m: [['c', 'Response time: 0.009, ↑970%'], ['y', 'Throughput: 10.600, ↓12%']] },
 { mask: [1, '17:9 43:5 52:9', '4:28 7:7 9:11 14:49 17:999 21:99 26:9 29:4 32:1 34:999999733499 48:4 50:99', '17:19 45:71 52:9'], m: [['c', 'Response time: 1.388, ↑696%']] },
 { mask: [1, '2:9 50:1', '0:23999 8:74 12:99168 18:9919 24:98999 31:299899 39:51 42:99 48:399', '13:89 19:59 34:99 48:981'], m: [['c', 'Response time: 0.003, ↑304%']] },
 { mask: [1, '2:9 57:9 74:5 76:1 78:7', '1:1999 8:97 12:994 16:9 18:5926 24:89995 31:189996 39:31 42:69 48:69 52:7 54:17697 60:1 64:995799999947245', '5:1 7:1 13:991 18:189 32:1 34:99 42:11 48:98 51:1 55:1 59:1 64:99 78:9'], m: [['c', 'Response time: 0.003, ↑283%']] },
 { mask: [1, '0:8 7:7 13:8 38:7 59:4', '0:6541 6:9981 12:29 15:593 19:9 21:935999712 31:99 36:2991 41:2995 47:3 49:999 54:9879992', '0:694 5:9995 13:9 15:95 18:98 21:9 23:199997922 31:59 34:981991 41:99949 47:3 53:9299795699'], m: [['c', 'Response time: 0.003, ↑298%']] },
 { mask: [2, '0:4 2:99 5:999934 12:999 16:513943895 26:8299', '0:4 3:9 5:9599 10:7 12:999 16:9 18:8957895 26:9 28:99'], m: [['x', 'Errors: 0, ↓100%']] },
 { mask: [1, '2:9959 7:9997 12:99998199999 25:998 29:99 32:99399 38:9 40:9 42:9919 47:9 49:7 51:99 54:99 57:9 59:9 61:9 63:1 65:39 68:89', '0:999999 7:511 12:99358 18:89 21:4 24:3999 32:39719 39:1 41:125 45:5 48:21359 54:99 57:912 61:9 63:9929 68:39', '13:3 15:5 19:3 34:1 49:1'], m: [['c', 'Response time: 0.003, ↑296%']] }
];
const SHADES = ['', '#e6e9e9', '#ccd0d0', '#b8bdbd', '#a0a5a5', '#8a9090', '#767d7d', '#5c6464', '#434c4c', '#263030'];

define('service-row', `<style>
  :host { display: block; padding: 10px 24px 7px; border-bottom: 2px solid #d3d5d5; }
  :host(:nth-of-type(3n)) { padding-bottom: 8px; }
  svg { display: block; height: 35px; width: 560px; max-width: 100%; margin-left: 2px; }
  p { display: flex; align-items: center; height: 38px; margin: 0; gap: 8px; color: #0d1414; }
  i { width: 14px; height: 13px; flex: none; }
  span { white-space: pre; }
</style><svg role="img" aria-label="Hidden name" viewBox="0 0 560 35" preserveAspectRatio="xMinYMin"></svg>`,
(host, root) => {
  const [first, ...rows] = host.item.mask;
  let cells = '';
  rows.forEach((row, n) => row.split(' ').forEach(run => {
    const [at, shades] = run.split(':');
    [...shades].forEach((s, i) => { cells += `<rect x="${(+at + i) * 7}" y="${(first + n) * 7}" width="7" height="7" fill="${SHADES[s]}"/>`; });
  }));
  root.querySelector('svg').innerHTML = cells;
  for (const [tone, text] of host.item.m) {
    const p = document.createElement('p');
    p.innerHTML = `<i style="background:${COLOR[tone]}"></i><span></span>`;
    p.lastChild.textContent = text;
    root.append(p);
  }
});

define('service-list', `<style>
  :host { display: flex; flex-direction: column; flex: 0 0 610px; min-height: 0; overflow: hidden; background: #fff; }
  header { display: flex; align-items: center; gap: 13px; height: 82px; padding: 0 24px 4px; flex: none; border-bottom: 2px solid #e3e4e4; }
  button { display: flex; align-items: center; justify-content: center; width: 52px; height: 50px; border: 0; border-radius: 4px; background: #edefee; color: #000; }
  h2 { margin: 0; font-size: 23px; font-weight: 400; color: #263030; }
  .rows { flex: 1; min-height: 0; overflow: hidden; }
</style>
<header><button aria-label="Search"><ui-icon name="search"></ui-icon></button><h2><slot></slot></h2></header>
<div class="rows"></div>`,
(host, root) => {
  const rows = root.querySelector('.rows');
  for (const item of SERVICES) { const row = document.createElement('service-row'); row.item = item; rows.append(row); }
});
</script>
</body>
</html>
